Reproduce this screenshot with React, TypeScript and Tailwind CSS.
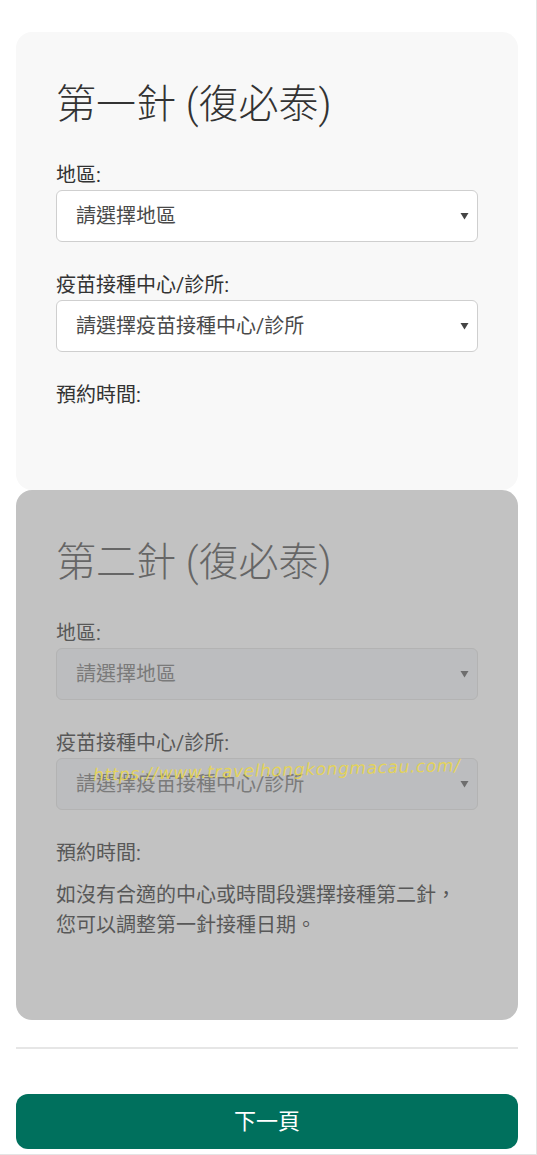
import React from "react";

const FONT = { fontFamily: 'Roboto, "Noto Sans CJK TC", "Noto Sans", sans-serif' };

function Caret({ color }: { color: string }) {
  return (
    <svg width="9" height="8" viewBox="0 0 9 8" className="shrink-0">
      <path d="M0.5 1 L8.5 1 L4.5 7.5 Z" fill={color} />
    </svg>
  );
}

function Select({ text, disabled }: { text: string; disabled?: boolean }) {
  return (
    <div
      className={
        disabled
          ? "flex h-[52px] items-center justify-between rounded-md border border-[#b3b3b3] bg-[#bcbdbf] pl-[19px] pr-[8px] text-[20px] text-[#7a7a7a]"
          : "flex h-[52px] items-center justify-between rounded-md border border-[#cfcfcf] bg-white pl-[19px] pr-[8px] text-[20px] text-[#4a4a4a]"
      }
    >
      <span className="leading-none">{text}</span>
      <Caret color={disabled ? "#6e6e6e" : "#444"} />
    </div>
  );
}

function Card({ title, disabled, note }: { title: string; disabled?: boolean; note?: boolean }) {
  const head = disabled ? "text-[#666]" : "text-[#333]";
  const label = disabled ? "text-[#585858]" : "text-[#333]";
  return (
    <div
      className={
        (disabled ? "bg-[#c2c2c2] " : "bg-[#f8f8f8] ") +
        "relative rounded-2xl px-10 pt-[49px] pb-20"
      }
    >
      <h2 className={"text-[40px] leading-[48px] font-light " + head}>{title}</h2>
      <div className={"mt-[31px] text-[20px] leading-[30px] " + label}>地區:</div>
      <Select text="請選擇地區" disabled={disabled} />
      <div className={"mt-[28px] text-[20px] leading-[30px] " + label}>疫苗接種中心/診所:</div>
      <Select text="請選擇疫苗接種中心/診所" disabled={disabled} />
      <div className={"mt-[28px] text-[20px] leading-[30px] " + label}>預約時間:</div>
      {note && (
        <p className={"mt-[12px] text-[20px] leading-[30px] " + label}>
          如沒有合適的中心或時間段選擇接種第二針，
          <br />
          您可以調整第一針接種日期。
        </p>
      )}
    </div>
  );
}

export default function App() {
  return (
    <div
      style={FONT}
      className="relative h-[1155px] w-[537px] overflow-hidden border-r border-b border-[#e4e4e4] bg-white"
    >
      <div className="flex flex-col pl-4 pr-[18px] pt-8">
        <Card title="第一針 (復必泰)" />
        <Card title="第二針 (復必泰)" disabled note />
        <div className="mt-[27px] h-[2px] bg-[#e6e6e6]" />
        <button className="mt-[45px] flex h-[55px] items-center justify-center rounded-xl bg-[#00705d] text-[22px] text-white">
          下一頁
        </button>
      </div>
      <div
        className="pointer-events-none absolute left-[93px] top-[758px] -rotate-[1.5deg] text-[17px] italic tracking-[0.6px] text-[#e8d64e]/90"
        style={{ fontFamily: '"DejaVu Sans", sans-serif' }}
      >
        https://www.travelhongkongmacau.com/
      </div>
    </div>
  );
}
